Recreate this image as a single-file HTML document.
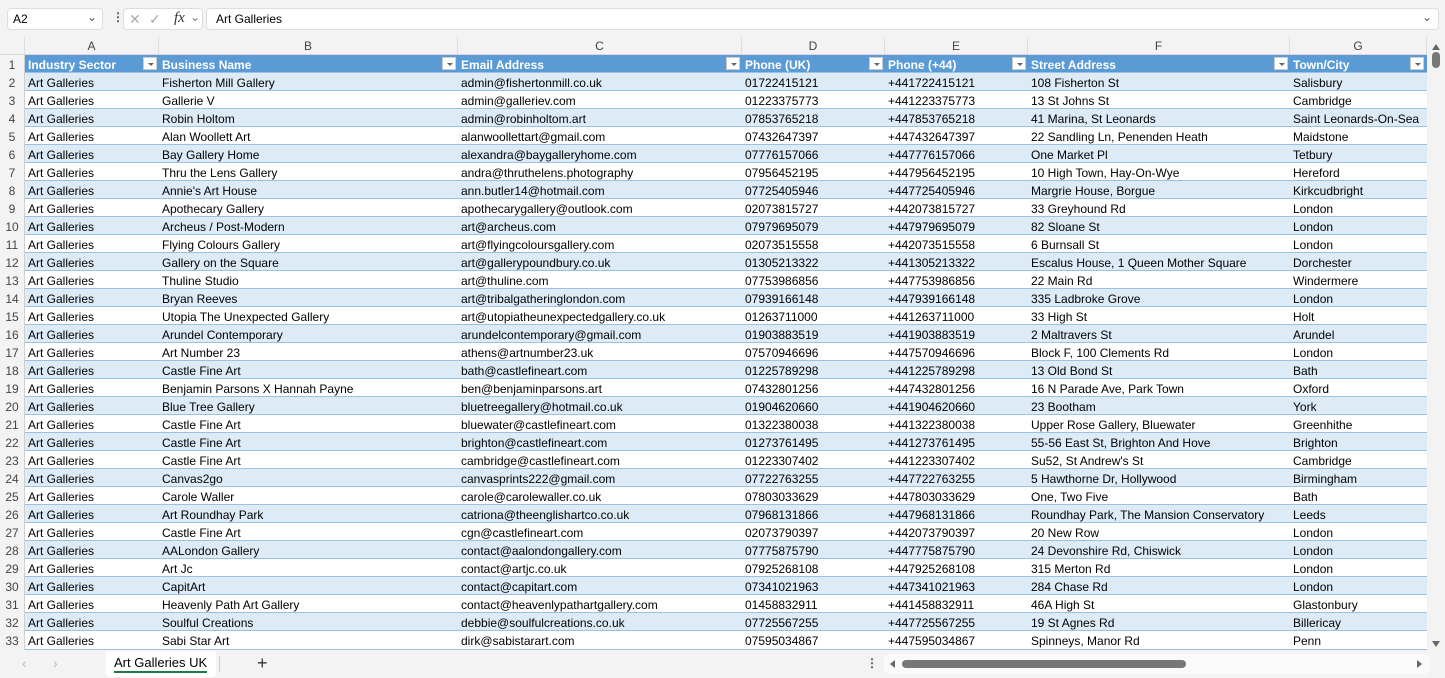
<!DOCTYPE html>
<html><head><meta charset="utf-8"><style>
*{box-sizing:border-box;margin:0;padding:0}
body{width:1445px;height:678px;overflow:hidden;background:#fff;font-family:"Liberation Sans",sans-serif;font-size:12px;color:#000;position:relative}
.top{position:absolute;left:0;top:0;width:1445px;height:37px;background:#f3f3f3}
.nb{position:absolute;left:7px;top:8px;width:96px;height:22px;background:#fff;border:1px solid #ddd;border-radius:4px;padding:3px 5px;font-size:12px}
.fb{position:absolute;left:123px;top:8px;width:80px;height:22px;background:#fff;border:1px solid #ddd;border-radius:4px;color:#aaa}
.fx{position:absolute;left:206px;top:8px;width:1233px;height:22px;background:#fff;border:1px solid #ddd;border-radius:4px;padding:3px 9px;font-size:12px}
.colh{position:absolute;top:37px;left:0;height:18px;width:1427px;background:#f3f3f3;border-bottom:1px solid #d8d8d8}
.colh div{position:absolute;top:0;height:17px;text-align:center;line-height:19px;color:#444;border-right:1px solid #ddd;font-size:12px}
.row{position:absolute;left:0;height:18px;width:1427px;border-bottom:1px solid #9bc2e6;margin-top:1px}
.row div{position:absolute;top:0;height:17px;line-height:20px;padding-left:3px;white-space:nowrap;overflow:hidden}
.row .n{left:0;width:25px;background:#f3f3f3;color:#444;text-align:center;padding:0;border-right:1px solid #d0d0d0;height:18px}
.e{background:#ddebf7}
.hd{background:#5b9bd5;color:#fff;font-weight:bold}
.ar{display:inline-block;position:absolute;top:2px;width:14px;height:13px;background:#fff;border:1px solid #ccc;padding:0!important}
.ar:after{content:"";position:absolute;left:4px;top:5px;border-left:3px solid transparent;border-right:3px solid transparent;border-top:3px solid #666}
.c1{left:25px;width:134px}.c2{left:159px;width:299px}.c3{left:458px;width:284px}.c4{left:742px;width:143px}.c5{left:885px;width:143px}.c6{left:1028px;width:262px}.c7{left:1290px;width:137px}
.vs{position:absolute;left:1427px;top:37px;width:18px;height:613px;background:#f3f3f3}
.bot{position:absolute;left:0;top:650px;width:1445px;height:28px;background:#f3f3f3}
.tab{position:absolute;left:106px;top:1px;width:110px;height:26px;background:#fff;border-radius:0 0 4px 4px;font-size:13px;padding:4px 8px}
.tab span{border-bottom:2px solid #1e7b45;padding-bottom:1px}
</style></head><body>
<div class="top">
<div class="nb">A2<span style="position:absolute;right:5px;top:1px;color:#555">&#8964;</span></div>
<div style="position:absolute;left:112px;top:10px;color:#555;font-weight:bold">&#8942;</div>
<div class="fb"><span style="position:absolute;left:5px;top:2px;font-size:14px">&#10005;</span><span style="position:absolute;left:25px;top:2px;font-size:14px">&#10003;</span><span style="position:absolute;left:50px;top:1px;color:#333;font-style:italic;font-family:'Liberation Serif';font-size:15px">fx</span><span style="position:absolute;left:66px;top:1px;color:#777">&#8964;</span></div>
<div class="fx">Art Galleries<span style="position:absolute;right:6px;top:1px;color:#555">&#8964;</span></div>
</div>
<div class="colh">
<div style="left:0;width:25px"></div>
<div class="c1">A</div><div class="c2">B</div><div class="c3">C</div><div class="c4">D</div><div class="c5">E</div><div class="c6">F</div><div class="c7">G</div>
</div>
<div class="row hd" style="top:54px"><div class="n" style="font-weight:normal">1</div>
<div class="c1">Industry Sector</div><span class="ar" style="left:143px"></span>
<div class="c2">Business Name</div><span class="ar" style="left:442px"></span>
<div class="c3">Email Address</div><span class="ar" style="left:726px"></span>
<div class="c4">Phone (UK)</div><span class="ar" style="left:869px"></span>
<div class="c5">Phone (+44)</div><span class="ar" style="left:1012px"></span>
<div class="c6">Street Address</div><span class="ar" style="left:1274px"></span>
<div class="c7">Town/City</div><span class="ar" style="left:1410px"></span>
</div>
<div class="row e" style="top:72px"><div class="n">2</div><div class="c1">Art Galleries</div><div class="c2">Fisherton Mill Gallery</div><div class="c3">admin@fishertonmill.co.uk</div><div class="c4">01722415121</div><div class="c5">+441722415121</div><div class="c6">108 Fisherton St</div><div class="c7">Salisbury</div></div>
<div class="row" style="top:90px"><div class="n">3</div><div class="c1">Art Galleries</div><div class="c2">Gallerie V</div><div class="c3">admin@galleriev.com</div><div class="c4">01223375773</div><div class="c5">+441223375773</div><div class="c6">13 St Johns St</div><div class="c7">Cambridge</div></div>
<div class="row e" style="top:108px"><div class="n">4</div><div class="c1">Art Galleries</div><div class="c2">Robin Holtom</div><div class="c3">admin@robinholtom.art</div><div class="c4">07853765218</div><div class="c5">+447853765218</div><div class="c6">41 Marina, St Leonards</div><div class="c7">Saint Leonards-On-Sea</div></div>
<div class="row" style="top:126px"><div class="n">5</div><div class="c1">Art Galleries</div><div class="c2">Alan Woollett Art</div><div class="c3">alanwoollettart@gmail.com</div><div class="c4">07432647397</div><div class="c5">+447432647397</div><div class="c6">22 Sandling Ln, Penenden Heath</div><div class="c7">Maidstone</div></div>
<div class="row e" style="top:144px"><div class="n">6</div><div class="c1">Art Galleries</div><div class="c2">Bay Gallery Home</div><div class="c3">alexandra@baygalleryhome.com</div><div class="c4">07776157066</div><div class="c5">+447776157066</div><div class="c6">One Market Pl</div><div class="c7">Tetbury</div></div>
<div class="row" style="top:162px"><div class="n">7</div><div class="c1">Art Galleries</div><div class="c2">Thru the Lens Gallery</div><div class="c3">andra@thruthelens.photography</div><div class="c4">07956452195</div><div class="c5">+447956452195</div><div class="c6">10 High Town, Hay-On-Wye</div><div class="c7">Hereford</div></div>
<div class="row e" style="top:180px"><div class="n">8</div><div class="c1">Art Galleries</div><div class="c2">Annie's Art House</div><div class="c3">ann.butler14@hotmail.com</div><div class="c4">07725405946</div><div class="c5">+447725405946</div><div class="c6">Margrie House, Borgue</div><div class="c7">Kirkcudbright</div></div>
<div class="row" style="top:198px"><div class="n">9</div><div class="c1">Art Galleries</div><div class="c2">Apothecary Gallery</div><div class="c3">apothecarygallery@outlook.com</div><div class="c4">02073815727</div><div class="c5">+442073815727</div><div class="c6">33 Greyhound Rd</div><div class="c7">London</div></div>
<div class="row e" style="top:216px"><div class="n">10</div><div class="c1">Art Galleries</div><div class="c2">Archeus / Post-Modern</div><div class="c3">art@archeus.com</div><div class="c4">07979695079</div><div class="c5">+447979695079</div><div class="c6">82 Sloane St</div><div class="c7">London</div></div>
<div class="row" style="top:234px"><div class="n">11</div><div class="c1">Art Galleries</div><div class="c2">Flying Colours Gallery</div><div class="c3">art@flyingcoloursgallery.com</div><div class="c4">02073515558</div><div class="c5">+442073515558</div><div class="c6">6 Burnsall St</div><div class="c7">London</div></div>
<div class="row e" style="top:252px"><div class="n">12</div><div class="c1">Art Galleries</div><div class="c2">Gallery on the Square</div><div class="c3">art@gallerypoundbury.co.uk</div><div class="c4">01305213322</div><div class="c5">+441305213322</div><div class="c6">Escalus House, 1 Queen Mother Square</div><div class="c7">Dorchester</div></div>
<div class="row" style="top:270px"><div class="n">13</div><div class="c1">Art Galleries</div><div class="c2">Thuline Studio</div><div class="c3">art@thuline.com</div><div class="c4">07753986856</div><div class="c5">+447753986856</div><div class="c6">22 Main Rd</div><div class="c7">Windermere</div></div>
<div class="row e" style="top:288px"><div class="n">14</div><div class="c1">Art Galleries</div><div class="c2">Bryan Reeves</div><div class="c3">art@tribalgatheringlondon.com</div><div class="c4">07939166148</div><div class="c5">+447939166148</div><div class="c6">335 Ladbroke Grove</div><div class="c7">London</div></div>
<div class="row" style="top:306px"><div class="n">15</div><div class="c1">Art Galleries</div><div class="c2">Utopia The Unexpected Gallery</div><div class="c3">art@utopiatheunexpectedgallery.co.uk</div><div class="c4">01263711000</div><div class="c5">+441263711000</div><div class="c6">33 High St</div><div class="c7">Holt</div></div>
<div class="row e" style="top:324px"><div class="n">16</div><div class="c1">Art Galleries</div><div class="c2">Arundel Contemporary</div><div class="c3">arundelcontemporary@gmail.com</div><div class="c4">01903883519</div><div class="c5">+441903883519</div><div class="c6">2 Maltravers St</div><div class="c7">Arundel</div></div>
<div class="row" style="top:342px"><div class="n">17</div><div class="c1">Art Galleries</div><div class="c2">Art Number 23</div><div class="c3">athens@artnumber23.uk</div><div class="c4">07570946696</div><div class="c5">+447570946696</div><div class="c6">Block F, 100 Clements Rd</div><div class="c7">London</div></div>
<div class="row e" style="top:360px"><div class="n">18</div><div class="c1">Art Galleries</div><div class="c2">Castle Fine Art</div><div class="c3">bath@castlefineart.com</div><div class="c4">01225789298</div><div class="c5">+441225789298</div><div class="c6">13 Old Bond St</div><div class="c7">Bath</div></div>
<div class="row" style="top:378px"><div class="n">19</div><div class="c1">Art Galleries</div><div class="c2">Benjamin Parsons X Hannah Payne</div><div class="c3">ben@benjaminparsons.art</div><div class="c4">07432801256</div><div class="c5">+447432801256</div><div class="c6">16 N Parade Ave, Park Town</div><div class="c7">Oxford</div></div>
<div class="row e" style="top:396px"><div class="n">20</div><div class="c1">Art Galleries</div><div class="c2">Blue Tree Gallery</div><div class="c3">bluetreegallery@hotmail.co.uk</div><div class="c4">01904620660</div><div class="c5">+441904620660</div><div class="c6">23 Bootham</div><div class="c7">York</div></div>
<div class="row" style="top:414px"><div class="n">21</div><div class="c1">Art Galleries</div><div class="c2">Castle Fine Art</div><div class="c3">bluewater@castlefineart.com</div><div class="c4">01322380038</div><div class="c5">+441322380038</div><div class="c6">Upper Rose Gallery, Bluewater</div><div class="c7">Greenhithe</div></div>
<div class="row e" style="top:432px"><div class="n">22</div><div class="c1">Art Galleries</div><div class="c2">Castle Fine Art</div><div class="c3">brighton@castlefineart.com</div><div class="c4">01273761495</div><div class="c5">+441273761495</div><div class="c6">55-56 East St, Brighton And Hove</div><div class="c7">Brighton</div></div>
<div class="row" style="top:450px"><div class="n">23</div><div class="c1">Art Galleries</div><div class="c2">Castle Fine Art</div><div class="c3">cambridge@castlefineart.com</div><div class="c4">01223307402</div><div class="c5">+441223307402</div><div class="c6">Su52, St Andrew's St</div><div class="c7">Cambridge</div></div>
<div class="row e" style="top:468px"><div class="n">24</div><div class="c1">Art Galleries</div><div class="c2">Canvas2go</div><div class="c3">canvasprints222@gmail.com</div><div class="c4">07722763255</div><div class="c5">+447722763255</div><div class="c6">5 Hawthorne Dr, Hollywood</div><div class="c7">Birmingham</div></div>
<div class="row" style="top:486px"><div class="n">25</div><div class="c1">Art Galleries</div><div class="c2">Carole Waller</div><div class="c3">carole@carolewaller.co.uk</div><div class="c4">07803033629</div><div class="c5">+447803033629</div><div class="c6">One, Two Five</div><div class="c7">Bath</div></div>
<div class="row e" style="top:504px"><div class="n">26</div><div class="c1">Art Galleries</div><div class="c2">Art Roundhay Park</div><div class="c3">catriona@theenglishartco.co.uk</div><div class="c4">07968131866</div><div class="c5">+447968131866</div><div class="c6">Roundhay Park, The Mansion Conservatory</div><div class="c7">Leeds</div></div>
<div class="row" style="top:522px"><div class="n">27</div><div class="c1">Art Galleries</div><div class="c2">Castle Fine Art</div><div class="c3">cgn@castlefineart.com</div><div class="c4">02073790397</div><div class="c5">+442073790397</div><div class="c6">20 New Row</div><div class="c7">London</div></div>
<div class="row e" style="top:540px"><div class="n">28</div><div class="c1">Art Galleries</div><div class="c2">AALondon Gallery</div><div class="c3">contact@aalondongallery.com</div><div class="c4">07775875790</div><div class="c5">+447775875790</div><div class="c6">24 Devonshire Rd, Chiswick</div><div class="c7">London</div></div>
<div class="row" style="top:558px"><div class="n">29</div><div class="c1">Art Galleries</div><div class="c2">Art Jc</div><div class="c3">contact@artjc.co.uk</div><div class="c4">07925268108</div><div class="c5">+447925268108</div><div class="c6">315 Merton Rd</div><div class="c7">London</div></div>
<div class="row e" style="top:576px"><div class="n">30</div><div class="c1">Art Galleries</div><div class="c2">CapitArt</div><div class="c3">contact@capitart.com</div><div class="c4">07341021963</div><div class="c5">+447341021963</div><div class="c6">284 Chase Rd</div><div class="c7">London</div></div>
<div class="row" style="top:594px"><div class="n">31</div><div class="c1">Art Galleries</div><div class="c2">Heavenly Path Art Gallery</div><div class="c3">contact@heavenlypathartgallery.com</div><div class="c4">01458832911</div><div class="c5">+441458832911</div><div class="c6">46A High St</div><div class="c7">Glastonbury</div></div>
<div class="row e" style="top:612px"><div class="n">32</div><div class="c1">Art Galleries</div><div class="c2">Soulful Creations</div><div class="c3">debbie@soulfulcreations.co.uk</div><div class="c4">07725567255</div><div class="c5">+447725567255</div><div class="c6">19 St Agnes Rd</div><div class="c7">Billericay</div></div>
<div class="row" style="top:630px;height:19px"><div class="n" style="height:19px">33</div><div class="c1">Art Galleries</div><div class="c2">Sabi Star Art</div><div class="c3">dirk@sabistarart.com</div><div class="c4">07595034867</div><div class="c5">+447595034867</div><div class="c6">Spinneys, Manor Rd</div><div class="c7">Penn</div></div>
<div class="vs">
<div style="position:absolute;left:5px;top:7px;border-left:4px solid transparent;border-right:4px solid transparent;border-bottom:6px solid #666"></div>
<div style="position:absolute;left:5px;top:15px;width:8px;height:16px;background:#777;border-radius:4px"></div>
<div style="position:absolute;left:5px;top:604px;border-left:4px solid transparent;border-right:4px solid transparent;border-top:6px solid #666"></div>
</div>
<div class="bot">
<div style="position:absolute;left:22px;top:5px;color:#bbb;font-size:14px">&lsaquo;</div>
<div style="position:absolute;left:53px;top:5px;color:#bbb;font-size:14px">&rsaquo;</div>
<div class="tab"><span>Art Galleries UK</span></div>
<div style="position:absolute;left:219px;top:6px;width:1px;height:16px;background:#ccc"></div>
<div style="position:absolute;left:257px;top:3px;font-size:18px;color:#333">+</div>
<div style="position:absolute;left:866px;top:6px;color:#555;font-weight:bold">&#8942;</div>
<div style="position:absolute;left:884px;top:4px;width:546px;height:20px;background:#fafafa;border-radius:6px"></div>
<div style="position:absolute;left:890px;top:10px;border-top:4px solid transparent;border-bottom:4px solid transparent;border-right:5px solid #666"></div>
<div style="position:absolute;left:902px;top:10px;width:284px;height:8px;background:#777;border-radius:4px"></div>
<div style="position:absolute;left:1417px;top:10px;border-top:4px solid transparent;border-bottom:4px solid transparent;border-left:5px solid #666"></div>
</div>
</body></html>
